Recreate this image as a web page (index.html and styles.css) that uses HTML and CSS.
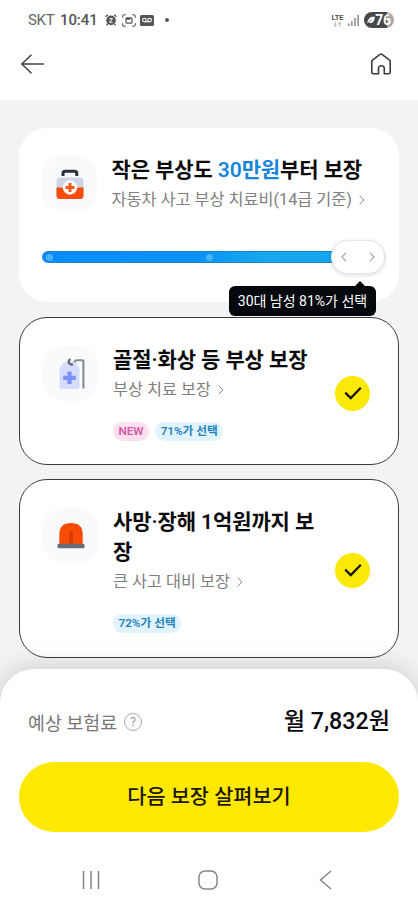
FILE: index.html
```html
<!DOCTYPE html>
<html lang="ko">
<head>
<meta charset="utf-8">
<meta name="viewport" content="width=device-width">
<title>보장 선택</title>
<link rel="stylesheet" href="styles.css">
</head>
<body>
<div class="screen">
  <header class="top">
    <div class="status">
      <span class="carrier">SKT</span>
      <span class="clock">10:41</span>
      <svg class="st-alarm" width="12" height="12" viewBox="0 0 12 12"><path d="M.6 2.7 2.8.8M11.4 2.7 9.2.8" stroke="#555" stroke-width="1.4"/><circle cx="6" cy="6.4" r="4.8" fill="#555"/><path d="m2.6 9.8-1.2 1.6m8-1.6 1.2 1.6" stroke="#555" stroke-width="1.3"/><path d="M4.5 4.6h3L4.5 8.2h3" fill="none" stroke="#fff" stroke-width="1"/></svg>
      <svg class="st-capture" width="14" height="13" viewBox="0 0 14 13" fill="none" stroke="#555" stroke-width="1.1"><path d="M.7 3.8V2.3Q.7.7 2.3.7h1.5M10.2.7h1.5q1.6 0 1.6 1.6v1.5M13.3 9.2v1.5q0 1.6-1.6 1.6h-1.5M3.8 12.3H2.3q-1.6 0-1.6-1.6V9.2"/><rect x="4" y="4" width="6" height="5.2" rx="1.2" stroke-width="1.3"/><path d="M4 4.8h4" stroke-width="2"/></svg>
      <svg class="st-voice" width="14" height="11" viewBox="0 0 14 11"><rect width="14" height="11" rx="1.6" fill="#555"/><g fill="none" stroke="#fff" stroke-width="1.1"><circle cx="4.4" cy="5" r="1.8"/><circle cx="9.6" cy="5" r="1.8"/><path d="M4.4 6.8h5.2"/></g></svg>
      <span class="st-dot"></span>
      <span class="lte">LTE<svg width="9" height="5" viewBox="0 0 9 5" fill="none" stroke="#aaa" stroke-width=".9"><path d="M2.3 0v4.4M.7 2.8l1.6 1.6 1.6-1.6M6.7 5V.6M5.100 2.200l1.600-1.600 1.600 1.600"/></svg></span>
      <svg class="st-signal" width="11" height="12" viewBox="0 0 11 12" stroke="#777" stroke-width="1.3"><path d="M.8 9.500V12M3.900 7.200V12M7 4V12M10.100.7V12"/></svg>
      <span class="battery"><svg width="8" height="8" viewBox="0 0 8 8"><path d="M.3 7.200C1 2.500 3 .6 7.800.8 7.600 5.500 5.500 8 1.900 6.700Z" fill="#fff"/><path d="M1 7 5 3.500" stroke="#484848" stroke-width=".7"/></svg>76</span>
    </div>
    <nav class="appbar">
      <svg width="26" height="22" viewBox="0 0 26 22" fill="none" stroke="#444" stroke-width="1.5"><path d="M24.200 11H1.800M11.500 1.800 1.800 11l9.700 9.200"/></svg>
      <svg width="22" height="23" viewBox="0 0 22 23" fill="none" stroke="#3c3c3c" stroke-width="1.600" stroke-linejoin="round"><path d="M1.800 8.600Q1.800 7.700 2.500 7.100L10 1.400q1-.7 2 0l7.500 5.700q.7.600.7 1.500v10.600q0 1.600-1.600 1.600h-4.300V15.500q0-2.700-2.900-2.700T8.500 15.500v5.300H3.400q-1.600 0-1.600-1.600Z"/></svg>
    </nav>
  </header>

  <main class="cards">
    <section class="card card-slider">
      <div class="summary">
        <div class="tile"><svg width="28" height="31" viewBox="0 0 28 31"><path d="M7 8V5.500Q7 3.300 9.300 3.300h9.200q2.300 0 2.300 2.200V8" fill="none" stroke="#29303d" stroke-width="3"/><rect x=".5" y="9.500" width="27" height="21.500" rx="3.500" fill="#cdd5e5"/><path d="M.5 19.500h27v8q0 3.500-3.500 3.500H4Q.5 31 .5 27.500Z" fill="#f94c0c"/><circle cx="14" cy="19.500" r="7.200" fill="#fff"/><path d="M14 15v9M9.500 19.500h9" stroke="#f25716" stroke-width="3"/></svg></div>
        <div class="copy">
          <h2>작은 부상도 <em>30만원</em>부터 보장</h2>
          <p>자동차 사고 부상 치료비(14급 기준)<svg class="chev" viewBox="0 0 6 10"><path d="m.7.7 4.200 4.300L.7 9.300"/></svg></p>
        </div>
      </div>
      <div class="slider">
        <div class="track"><i></i><i></i></div>
        <div class="thumb">
          <svg width="6" height="10" viewBox="0 0 6 10"><path d="M5.200.6.900 5l4.300 4.400"/></svg>
          <svg width="6" height="10" viewBox="0 0 6 10"><path d="M.8.6 5.100 5 .8 9.400"/></svg>
        </div>
        <div class="tooltip">30대 남성 81%가 선택</div>
      </div>
    </section>

    <section class="card outlined">
      <div class="tile bottle"><svg width="26" height="32" viewBox="0 0 26 32"><path d="M3.500 7V5.800L6 3.800h9l3 2V7q2.500 1.500 2.500 4v17.500q0 2.500-2.500 2.500H3q-2.500 0-2.500-2.500V11q0-2.500 3-4Z" fill="#d5dcfc"/><path d="M10.500 13.500v12.600M4.200 19.800h12.600" stroke="#7d91f7" stroke-width="4.200"/><path d="M24.400 30.500V3.200q0-1-1-1H18q-2.200 0-2.600 2.200" fill="none" stroke="#858a95" stroke-width="2.100"/><path d="M11.500 1.300q-2.800 1.300-1.400 3.700 1.300 2.200 3.900 1.300" fill="none" stroke="#5d626e" stroke-width="2.200"/></svg></div>
      <div class="copy">
        <h2>골절·화상 등 부상 보장</h2>
        <p>부상 치료 보장<svg class="chev" viewBox="0 0 6 10"><path d="m.7.7 4.200 4.300L.7 9.300"/></svg></p>
        <div class="tags"><span class="tag pink">NEW</span><span class="tag">71%가 선택</span></div>
      </div>
      <div class="check"><svg width="18" height="14" viewBox="0 0 18 14"><path d="m1.200 6.600 5.600 5.500L16.800 1.700"/></svg></div>
    </section>

    <section class="card outlined last">
      <div class="tile"><svg width="28" height="27" viewBox="0 0 28 27"><path d="M2.300 22V12.500Q2.300 1 14 1t11.700 11.500V22Z" fill="#fa4b05"/><path d="M14 10.500v12" stroke="#d23c08" stroke-width="3.600" stroke-linecap="round"/><rect x=".5" y="21.700" width="27" height="4.600" rx="1.200" fill="#686b75"/></svg></div>
      <div class="copy">
        <h2>사망·장해 1억원까지 보장</h2>
        <p>큰 사고 대비 보장<svg class="chev" viewBox="0 0 6 10"><path d="m.7.7 4.200 4.300L.7 9.300"/></svg></p>
        <div class="tags"><span class="tag">72%가 선택</span></div>
      </div>
      <div class="check"><svg width="18" height="14" viewBox="0 0 18 14"><path d="m1.200 6.600 5.600 5.500L16.800 1.700"/></svg></div>
    </section>
  </main>

  <footer class="sheet">
    <div class="price">
      <span class="label">예상 보험료</span><span class="help">?</span>
      <strong>월 7,832원</strong>
    </div>
    <button class="cta">다음 보장 살펴보기</button>
    <div class="sysnav">
      <svg width="18" height="18" viewBox="0 0 18 18"><path d="M1.500 0v18M9 0v18M16.500 0v18"/></svg>
      <svg width="20" height="20" viewBox="0 0 20 20"><rect x="1" y="1" width="18" height="18" rx="6"/></svg>
      <svg width="13" height="20" viewBox="0 0 13 20"><path d="M12 1 1.500 10 12 19"/></svg>
    </div>
  </footer>
</div>
</body>
</html>
```
FILE: styles.css
```css
* { box-sizing: border-box; margin: 0; padding: 0; }
body { font-family: Roboto, "Noto Sans CJK KR", sans-serif; background: #f2f3f5; color: #0b0b0d; }
svg { display: block; flex: none; }
.screen { width: 418px; height: 906px; overflow: hidden; display: flex; flex-direction: column; background: #f2f3f5; }

.top { height: 100px; flex: none; background: #fff; }
.status { height: 40px; padding: 0 24px 0 28px; display: flex; align-items: center; color: #555; font-size: 15px; line-height: 20px; }
.carrier { width: 32px; letter-spacing: -.3px; color: #666; }
.clock { width: 45px; font-weight: 500; letter-spacing: -.1px; }
.st-capture { margin-left: 5px; }
.st-voice { margin-left: 4px; }
.st-dot { width: 4px; height: 4px; border-radius: 50%; background: #555; margin-left: 11px; }
.lte { margin-left: auto; width: 13px; font-size: 7.5px; line-height: 8px; font-weight: 700; display: flex; flex-direction: column; align-items: center; }
.st-signal { margin-left: 4px; }
.battery { margin-left: 5px; width: 30px; height: 16px; border-radius: 8px; background: linear-gradient(90deg, #484848 76%, #aaa 76%); color: #fff; font-weight: 700; font-size: 14px; line-height: 16px; display: flex; align-items: center; justify-content: center; letter-spacing: -.3px; }
.appbar { display: flex; justify-content: space-between; align-items: center; height: 48px; padding: 0 26px 0 20px; }

.cards { flex: none; height: 569px; padding: 28px 19px 0; display: flex; flex-direction: column; }
.card { background: #fff; border-radius: 28px; flex: none; }
.card-slider { height: 174px; padding: 27px 14px 0 23px; margin-bottom: 15px; }
.summary { display: flex; gap: 15px; }
.card-slider .copy { margin-left: -.5px; }
.tile { width: 55px; height: 55px; border-radius: 20px; background: #f8fafc; display: flex; align-items: center; justify-content: center; flex: none; margin-top: 1px; }
.tile.bottle { padding-left: 3px; }
h2 { font-size: 21px; line-height: 30px; font-weight: 600; letter-spacing: -.1px; word-break: break-all; }
h2 em { font-style: normal; color: #1786d9; }
.copy p { display: flex; align-items: center; gap: 7px; margin-top: 1px; font-size: 16.3px; line-height: 28px; color: #808080; white-space: nowrap; }
.chev { width: 6px; height: 10px; fill: none; stroke: #888; stroke-width: 1; }
.slider { position: relative; display: flex; align-items: center; height: 36px; margin-top: 25px; }
.track { flex: 1; height: 12px; border-radius: 6px; background: linear-gradient(90deg, #078cff, #0a92f8 45%, #16a8ea 65%, #16a4ec); border: 1px solid #1b86d0; display: flex; align-items: center; padding-left: 3px; gap: 153px; }
.track i { width: 7px; height: 7px; border-radius: 50%; background: #4db3f8; }
.thumb { width: 54px; height: 34px; margin-left: -54px; border-radius: 17px; background: #fff; border: 1px solid #e8e8e8; box-shadow: 0 1px 4px rgba(0,0,0,.16); display: flex; justify-content: space-between; align-items: center; padding: 0 9px; z-index: 1; }
.thumb svg { fill: none; stroke: #aaa; stroke-width: 1.3; }
.tooltip { position: absolute; top: 47px; right: 9px; width: 147px; height: 30px; border-radius: 6px; background: #05080c; color: #fff; font-size: 14px; line-height: 30px; text-align: center; white-space: nowrap; z-index: 2; }
.tooltip::before { content: ""; position: absolute; top: -5px; right: 11px; border: 5px solid transparent; border-top: 0; border-bottom-color: #05080c; }

.outlined { border: 1px solid #3b3c42; display: flex; align-items: center; padding: 27px 28px 23px 23px; margin-bottom: 14px; }
.outlined.last { padding-bottom: 24px; }
.outlined .tile { align-self: flex-start; }
.outlined .copy { width: 210px; margin-left: 15px; }
.tags { display: flex; gap: 6px; margin-top: 18px; }
.tag { height: 19px; border-radius: 9.500px; padding: 0 5.500px; font-size: 11.700px; line-height: 19px; font-weight: 600; background: #e0f3fe; color: #2584ba; white-space: nowrap; }
.tag.pink { background: #fce0f0; color: #d459a4; }
.check { margin-left: auto; width: 35px; height: 35px; border-radius: 50%; background: #fce807; display: flex; align-items: center; justify-content: center; }
.check svg { fill: none; stroke: #141414; stroke-width: 2.200; }

.sheet { flex: none; height: 237px; background: #fff; border-radius: 34px 34px 0 0; box-shadow: 0 -3px 24px rgba(0,0,0,.15); position: relative; z-index: 3; padding: 0 19px; }
.price { height: 93px; padding: 12px 9px 0; display: flex; align-items: center; }
.label { font-size: 18.400px; color: #777; }
.help { width: 18px; height: 18px; margin-left: 7px; border: 1px solid #aaa; border-radius: 50%; color: #999; font-size: 12px; line-height: 16px; text-align: center; }
.price strong { margin-left: auto; font-size: 23.200px; line-height: 30px; margin-top: -2px; font-weight: 500; }
.cta { display: block; width: 380px; height: 70px; border: 0; border-radius: 35px; background: #ffe900; color: #1c1703; font: 500 20.800px/68px Roboto, "Noto Sans CJK KR", sans-serif; }
.sysnav { height: 74px; padding: 22px 67px 0 63px; display: flex; align-items: center; justify-content: space-between; }
.sysnav svg { fill: none; stroke: #858585; stroke-width: 1.500; }
.sysnav svg:nth-child(2) { margin-left: -3px; }
```
